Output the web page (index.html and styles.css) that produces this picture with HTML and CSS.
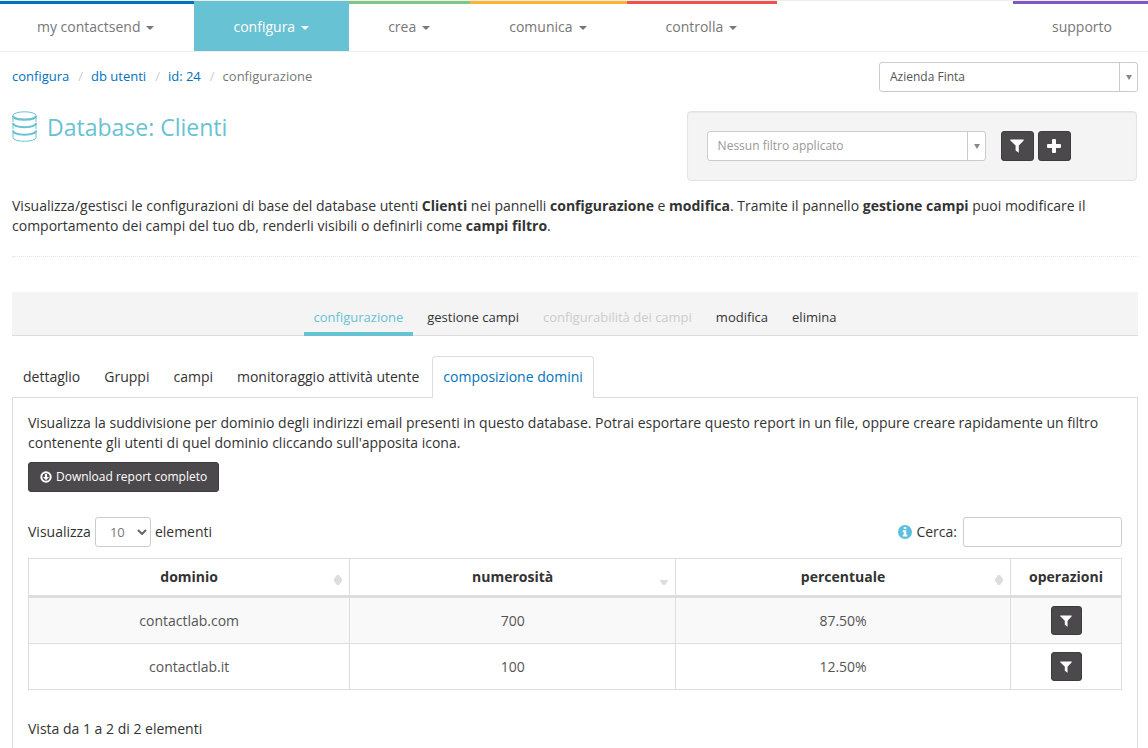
FILE: index.html
```
<!DOCTYPE html>
<html lang="it">
<head>
<meta charset="utf-8">
<meta name="viewport" content="width=device-width, initial-scale=1">
<title>Database: Clienti</title>
<link rel="stylesheet" href="styles.css">
</head>
<body>
<svg class="sprite" aria-hidden="true">
  <symbol id="filter" viewBox="0 0 14 14"><path d="M0.3 0.5h13.4v1L8.8 6.6v7.2L5.6 11.4V6.6L0.3 1.5z"/></symbol>
  <symbol id="plus" viewBox="0 0 14 14"><path d="M5 1q0-1 1-1h2q1 0 1 1v4h4q1 0 1 1v2q0 1-1 1H9v4q0 1-1 1H6q-1 0-1-1V9H1Q0 9 0 8V6q0-1 1-1h4z"/></symbol>
  <symbol id="sort-up" viewBox="0 0 8 5"><path d="M0 5V4L3 0h2l3 4v1z"/></symbol>
  <symbol id="sort-down" viewBox="0 0 8 5"><path d="M0 0v1l3 4h2l3-4V0z"/></symbol>
</svg>

<nav class="topnav" aria-label="Principale">
  <a class="topnav-item blue" href="#">my contactsend <span class="caret"></span></a>
  <a class="topnav-item active" href="#">configura <span class="caret"></span></a>
  <a class="topnav-item green" href="#">crea <span class="caret"></span></a>
  <a class="topnav-item yellow" href="#">comunica <span class="caret"></span></a>
  <a class="topnav-item red" href="#">controlla <span class="caret"></span></a>
  <a class="topnav-item purple" href="#">supporto</a>
</nav>

<main class="page">
  <div class="crumb-row">
    <ol class="breadcrumb">
      <li><a href="#">configura</a></li>
      <li><a href="#">db utenti</a></li>
      <li><a href="#">id: 24</a></li>
      <li>configurazione</li>
    </ol>
    <div class="combo company">
      <select aria-label="Azienda"><option>Azienda Finta</option></select>
      <span class="combo-arrow"></span>
    </div>
  </div>

  <header class="head-row">
    <h1 class="title">
      <svg class="db-icon" viewBox="0 0 25 31" aria-hidden="true">
        <ellipse cx="12.500" cy="4.500" rx="11.500" ry="3.700"/>
        <path d="M1 4.500v6.500M24 4.500v6.500M1 12.500v5.500M24 12.500v5.500M1 19.500v7c0 5 23 5 23 0v-7"/>
        <path class="thick" d="M1 5c0 5 23 5 23 0M1 12c0 5.500 23 5.500 23 0M1 19.500c0 5.500 23 5.500 23 0"/>
      </svg>
      Database: Clienti
    </h1>
    <form class="well">
      <div class="combo filter-combo">
        <select class="muted" aria-label="Filtro"><option>Nessun filtro applicato</option></select>
        <span class="combo-arrow"></span>
      </div>
      <div class="well-buttons">
        <button class="btn btn-icon" type="button" aria-label="Filtra"><svg class="icon"><use href="#filter"/></svg></button>
        <button class="btn btn-icon" type="button" aria-label="Aggiungi"><svg class="icon"><use href="#plus"/></svg></button>
      </div>
    </form>
  </header>

  <p class="intro">Visualizza/gestisci le configurazioni di base del database utenti <b>Clienti</b> nei pannelli <b>configurazione</b> e <b>modifica</b>. Tramite il pannello <b>gestione campi</b> puoi modificare il comportamento dei campi del tuo db, renderli visibili o definirli come <b>campi filtro</b>.</p>

  <nav class="subnav" aria-label="Sezioni">
    <a class="current" href="#">configurazione</a>
    <a href="#">gestione campi</a>
    <a class="disabled" aria-disabled="true">configurabilità dei campi</a>
    <a href="#">modifica</a>
    <a href="#">elimina</a>
  </nav>

  <nav class="tabs" aria-label="Schede">
    <a href="#">dettaglio</a>
    <a href="#">Gruppi</a>
    <a href="#">campi</a>
    <a href="#">monitoraggio attività utente</a>
    <a class="current" href="#">composizione domini</a>
  </nav>

  <section class="panel">
    <p class="panel-text">Visualizza la suddivisione per dominio degli indirizzi email presenti in questo database. Potrai esportare questo report in un file, oppure creare rapidamente un filtro contenente gli utenti di quel dominio cliccando sull'apposita icona.</p>
    <button class="btn btn-download" type="button">
      <svg class="download-icon" viewBox="0 0 12 12" aria-hidden="true"><circle cx="6" cy="6" r="4.700"/><path d="M4.900 2.900h2.200v3h2L6 9.200 2.900 5.900h2z"/></svg>
      Download report completo
    </button>

    <div class="table-tools">
      <label class="length">Visualizza
        <span class="length-box">
          <select><option>10</option></select>
          <svg class="chevron" viewBox="0 0 10 6" aria-hidden="true"><path d="M1 1l4 4 4-4"/></svg>
        </span>
        elementi</label>
      <label class="search">
        <svg class="info-icon" viewBox="0 0 14 14" aria-hidden="true"><circle cx="7" cy="7" r="7"/><path d="M5.700 2h2.600v2H5.700zM4.700 5.300h3.600v4.500h1v1.700H4.700V9.800h1V7h-1z"/></svg>
        <span>Cerca:</span>
        <input type="search">
      </label>
    </div>

    <table class="domains">
      <colgroup><col class="c-domain"><col class="c-count"><col><col class="c-ops"></colgroup>
      <thead>
        <tr>
          <th><div class="th">dominio<span class="sort"><svg><use href="#sort-up"/></svg><svg><use href="#sort-down"/></svg></span></div></th>
          <th><div class="th">numerosità<span class="sort"><svg class="off"><use href="#sort-up"/></svg><svg><use href="#sort-down"/></svg></span></div></th>
          <th><div class="th">percentuale<span class="sort"><svg><use href="#sort-up"/></svg><svg><use href="#sort-down"/></svg></span></div></th>
          <th><div class="th">operazioni</div></th>
        </tr>
      </thead>
      <tbody>
        <tr><td>contactlab.com</td><td>700</td><td>87.50%</td><td><button class="btn btn-row" type="button" aria-label="Crea filtro contactlab.com"><svg class="icon small"><use href="#filter"/></svg></button></td></tr>
        <tr><td>contactlab.it</td><td>100</td><td>12.50%</td><td><button class="btn btn-row" type="button" aria-label="Crea filtro contactlab.it"><svg class="icon small"><use href="#filter"/></svg></button></td></tr>
      </tbody>
    </table>
    <p class="summary">Vista da 1 a 2 di 2 elementi</p>
  </section>
</main>
</body>
</html>
```
FILE: styles.css
```
* { box-sizing: border-box; }
html { overflow: hidden auto; scrollbar-width: none; }
body {
  margin: 0;
  background: #fff;
  color: #333;
  font: 14px/20px "Open Sans", sans-serif;
}
a { color: #0072bc; text-decoration: none; }
select, input, button { font-family: inherit; margin: 0; }
.sprite { display: none; }

.topnav {
  display: flex;
  height: 52px;
  border-top: 1px solid #eee;
  border-bottom: 1px solid #eee;
}
.topnav-item {
  display: flex;
  align-items: center;
  gap: 6px;
  padding: 0 40px 2px 39px;
  border-top: 3px solid transparent;
  color: #777;
}
.topnav-item:first-child { padding-left: 37px; }
.topnav-item.active { background: #67c2d4; border-color: #67c2d4; color: #fff; }
.blue { border-color: #0072bc; }
.green { border-color: #81c784; }
.yellow { border-color: #fbb431; }
.red { border-color: #ef5350; }
.topnav-item.purple { border-color: #7e57c2; margin-left: auto; padding-right: 36px; }
.caret {
  margin-top: 2px;
  border: 4px solid transparent;
  border-top-color: currentColor;
  border-bottom: 0;
}

.page { padding: 10px 10px 0 12px; }
.crumb-row, .head-row { display: flex; justify-content: space-between; align-items: flex-start; }
.breadcrumb {
  display: flex;
  margin: 0;
  padding: 4px 0;
  list-style: none;
  font-size: 13px;
  color: #777;
}
.breadcrumb li + li::before { content: "/"; padding: 0 8px 0 9px; color: #ccc; }

.combo { display: grid; }
.combo select {
  grid-area: 1 / 1;
  width: 100%;
  height: 30px;
  padding: 0 30px 1px 10px;
  appearance: none;
  border: 1px solid #ccc;
  border-radius: 3px;
  background: #fff;
  color: #555;
  font-size: 12px;
}
.combo select.muted { color: #999; }
.combo-arrow {
  grid-area: 1 / 1;
  justify-self: end;
  display: flex;
  align-items: center;
  justify-content: center;
  width: 19px;
  height: 30px;
  border-left: 1px solid #ccc;
  pointer-events: none;
}
.combo-arrow::after {
  content: "";
  border: 3px solid transparent;
  border-top: 5px solid #888;
  border-bottom: 0;
}
.company { width: 23%; }

.head-row { margin-top: 19px; }
.title {
  display: flex;
  align-items: center;
  gap: 10px;
  margin: 0;
  color: #67c2d4;
  font-size: 23px;
  line-height: 30px;
  font-weight: 400;
}
.db-icon { width: 25px; height: 31px; fill: none; stroke: #67c2d4; stroke-width: 1; }
.db-icon .thick { stroke-width: 2; }
.well {
  display: flex;
  gap: 15px;
  width: 40%;
  margin-right: 1px;
  padding: 19px;
  border: 1px solid #e3e3e3;
  border-radius: 4px;
  background: #f4f4f4;
  box-shadow: inset 0 1px 1px rgba(0, 0, 0, .05);
}
.filter-combo { flex: 0 0 68%; }
.well-buttons { display: flex; gap: 4px; }
.btn {
  display: inline-flex;
  align-items: center;
  justify-content: center;
  padding: 0;
  border: 1px solid #3f3c3f;
  border-radius: 3px;
  background: #4c494c;
  color: #fff;
  font-size: 12px;
  cursor: pointer;
}
.btn-icon { width: 33px; height: 30px; }
.icon { width: 14px; height: 14px; fill: #fff; }
.icon.small { width: 12px; height: 12px; }

.intro {
  margin: 15px 0 0;
  padding-bottom: 20px;
  border-bottom: 1px dotted #e4e4e4;
}

.subnav {
  display: flex;
  justify-content: center;
  gap: 4px;
  margin-top: 35px;
  padding-top: 14px;
  background: #f4f4f4;
  box-shadow: inset 0 -1px #ddd;
  font-size: 13px;
}
.subnav a { padding: 1px 10px 5px; border-bottom: 4px solid transparent; color: #333; }
.subnav a.current { color: #67c2d4; border-color: #67c2d4; }
.subnav a.disabled { color: #ccc; }

.tabs { display: flex; gap: 2px; margin-top: 20px; }
.tabs a {
  margin-bottom: -1px;
  padding: 10px 10px 11px;
  border: 1px solid transparent;
  border-bottom: 0;
  border-radius: 4px 4px 0 0;
  color: #333;
}
.tabs a.current { position: relative; background: #fff; border-color: #ddd; color: #0072bc; }
.panel { padding: 15px 15px 30px; border: 1px solid #ddd; }
.panel-text { margin: 0 0 9px; }
.btn-download { gap: 4px; height: 30px; padding: 0 11px 1px; }
.download-icon { width: 12px; height: 12px; fill: #fff; }
.download-icon circle { fill: none; stroke: #fff; stroke-width: 2; }

.table-tools { display: flex; justify-content: space-between; margin: 25px 0 11px; }
.length, .search { display: flex; align-items: center; gap: 4px; }
.length-box { display: grid; align-items: center; }
.length-box select {
  grid-area: 1 / 1;
  width: 56px;
  height: 30px;
  padding: 0 14px;
  appearance: none;
  border: 1px solid #ccc;
  border-radius: 3px;
  background: #fff;
  color: #777;
  font-size: 13px;
}
.chevron {
  grid-area: 1 / 1;
  justify-self: end;
  width: 10px;
  height: 6px;
  margin-right: 4px;
  fill: none;
  stroke: #666;
  stroke-width: 2;
  pointer-events: none;
}
.search input {
  width: 159px;
  height: 30px;
  margin-left: 2px;
  border: 1px solid #ccc;
  border-radius: 3px;
  font-size: 12px;
}
.info-icon { width: 14px; height: 14px; fill: #5bc0de; }
.info-icon path { fill: #fff; }

.domains { width: 100%; border-collapse: collapse; table-layout: fixed; text-align: center; }
.c-domain { width: 29.4%; }
.c-count { width: 29.8%; }
.c-ops { width: 111px; }
.domains th, .domains td { border: 1px solid #ddd; }
.domains th { height: 38px; padding: 0 5px; border-bottom-width: 3px; }
.domains td { height: 46px; padding: 0 8px; color: #555; }
.domains tbody tr:first-child td { height: 47px; }
.domains tbody tr:nth-child(odd) { background: #f9f9f9; }
.th { position: relative; }
.sort {
  position: absolute;
  right: 2px;
  top: 8px;
  display: grid;
}
.sort svg { display: block; width: 8px; height: 5px; fill: #ddd; }
.sort .off { visibility: hidden; }
.btn-row { width: 31px; height: 29px; vertical-align: middle; }
.summary { margin: 29px 0 0; }
```
